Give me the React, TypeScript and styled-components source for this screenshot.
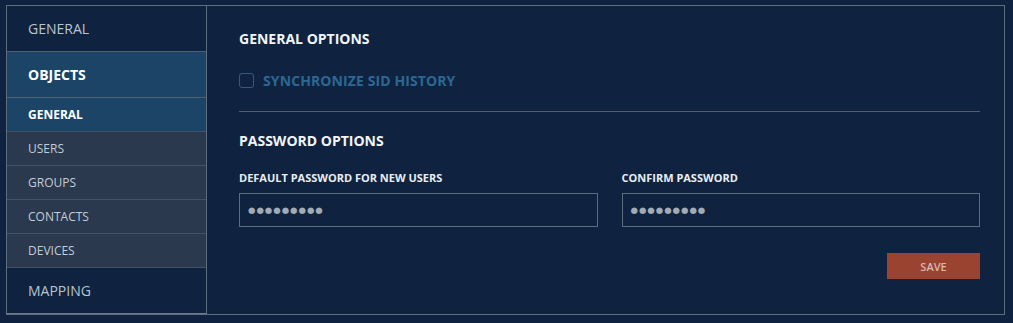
import { createGlobalStyle } from "styled-components";
import styled from "styled-components";

const GlobalStyle = createGlobalStyle`
  body {
    margin: 0;
    background-color: #0f2340;
    font-family: "Open Sans", "Liberation Sans", sans-serif;
  }
  * {
    box-sizing: border-box;
  }
`;

const topItems = ["GENERAL", "OBJECTS"];
const subItems = ["GENERAL", "USERS", "GROUPS", "CONTACTS", "DEVICES"];

const App = () => {
  return (
    <>
      <GlobalStyle />
      <Page>
        <Frame>
          <SideBar>
            {topItems.map((item) => (
              <TopItem key={item} active={item === "OBJECTS"}>
                {item}
              </TopItem>
            ))}
            {subItems.map((item, i) => (
              <SubItem key={item} active={i === 0}>
                {item}
              </SubItem>
            ))}
            <TopItem last>MAPPING</TopItem>
          </SideBar>
          <Content>
            <SectionTitle>GENERAL OPTIONS</SectionTitle>
            <CheckRow>
              <CheckBox />
              <CheckLabel>SYNCHRONIZE SID HISTORY</CheckLabel>
            </CheckRow>
            <Divider />
            <SectionTitle>PASSWORD OPTIONS</SectionTitle>
            <FieldGrid>
              <Field>
                <FieldLabel>DEFAULT PASSWORD FOR NEW USERS</FieldLabel>
                <PasswordBox>{"●●●●●●●●●"}</PasswordBox>
              </Field>
              <Field>
                <FieldLabel>CONFIRM PASSWORD</FieldLabel>
                <PasswordBox>{"●●●●●●●●●"}</PasswordBox>
              </Field>
            </FieldGrid>
            <ButtonRow>
              <SaveButton>SAVE</SaveButton>
            </ButtonRow>
          </Content>
        </Frame>
      </Page>
    </>
  );
};

const Page = styled.div`
  padding: 5px 0 0 6px;
`;

const Frame = styled.div`
  display: flex;
  width: 999px;
  height: 310px;
  border: 1px solid #5d6d80;
`;

const SideBar = styled.div`
  display: flex;
  flex-direction: column;
  width: 200px;
  height: 308px;
  border-right: 1px solid #5d6d80;
  border-bottom: 1px solid #6b7a8b;
`;

const TopItem = styled.div<{ active?: boolean; last?: boolean }>`
  display: flex;
  align-items: center;
  height: ${(p) => (p.last ? "45px" : "46px")};
  padding-left: 21px;
  font-size: 14px;
  font-weight: ${(p) => (p.active ? 700 : 400)};
  color: ${(p) => (p.active ? "#ffffff" : "#b9c3cf")};
  background-color: ${(p) => (p.active ? "#1b4466" : "#0f2340")};
  border-bottom: ${(p) => (p.last ? "none" : "1px solid #4e5f72")};
`;

const SubItem = styled.div<{ active?: boolean }>`
  display: flex;
  align-items: center;
  height: 34px;
  padding-left: 21px;
  font-size: 12px;
  font-weight: ${(p) => (p.active ? 700 : 400)};
  color: ${(p) => (p.active ? "#ffffff" : "#c3ccd7")};
  background-color: ${(p) => (p.active ? "#1b4466" : "#2a394d")};
  border-bottom: 1px solid #415266;
`;

const Content = styled.div`
  flex: 1;
  padding: 23px 24px 0 32px;
`;

const SectionTitle = styled.div`
  font-size: 14px;
  font-weight: 700;
  color: #f2f5f8;
  line-height: 20px;
`;

const CheckRow = styled.div`
  display: flex;
  align-items: center;
  gap: 9px;
  margin-top: 22px;
`;

const CheckBox = styled.div`
  width: 15px;
  height: 15px;
  border: 1px solid #37597d;
  border-radius: 3px;
`;

const CheckLabel = styled.div`
  font-size: 14px;
  font-weight: 700;
  color: #2d6792;
  letter-spacing: 0.1px;
`;

const Divider = styled.div`
  height: 1px;
  margin: 21px 0 19px;
  background-color: #4f5e70;
`;

const FieldGrid = styled.div`
  display: grid;
  grid-template-columns: 1fr 1fr;
  column-gap: 24px;
  margin-top: 19px;
`;

const Field = styled.div`
  display: flex;
  flex-direction: column;
`;

const FieldLabel = styled.div`
  font-size: 11px;
  font-weight: 700;
  color: #e8edf2;
  line-height: 16px;
  margin-bottom: 7px;
`;

const PasswordBox = styled.div`
  display: flex;
  align-items: center;
  height: 34px;
  padding-left: 8px;
  border: 1px solid #5d6d80;
  color: #a3abb5;
  font-family: "DejaVu Sans", sans-serif;
  font-size: 8.5px;
  letter-spacing: 1px;
`;

const ButtonRow = styled.div`
  display: flex;
  justify-content: flex-end;
  margin-top: 26px;
`;

const SaveButton = styled.button`
  width: 93px;
  height: 26px;
  border: none;
  background-color: #9a4330;
  color: #d9b8ae;
  font-family: "Open Sans", "Liberation Sans", sans-serif;
  font-size: 11px;
  font-weight: 600;
  cursor: pointer;
`;

export default App;
